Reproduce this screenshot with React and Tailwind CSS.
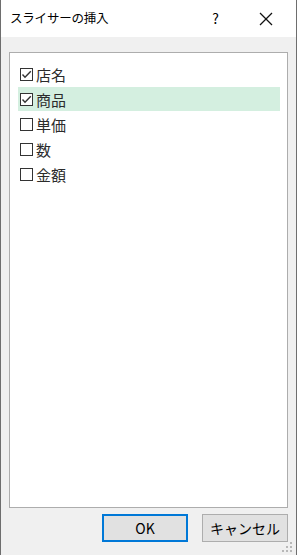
import React from 'react';

const FONT = { fontFamily: '"Yu Gothic UI", "Noto Sans CJK JP", "Noto Sans", sans-serif' };

const FIELDS = [
  { id: 'store', label: '店名', checked: true },
  { id: 'product', label: '商品', checked: true, selected: true },
  { id: 'price', label: '単価', checked: false },
  { id: 'qty', label: '数', checked: false },
  { id: 'amount', label: '金額', checked: false },
];

function CheckBox({ checked }) {
  return (
    <span className="w-[13px] h-[13px] border border-[#333333] bg-white flex items-center justify-center shrink-0">
      {checked && (
        <svg viewBox="0 0 11 11" width="11" height="11" fill="none" stroke="#333333" strokeWidth="1.4">
          <polyline points="1.5,5.5 4,8.2 9.8,2.2" />
        </svg>
      )}
    </span>
  );
}

function Row({ item }) {
  return (
    <div className={`h-6 flex items-center pl-[2px] ${item.selected ? 'bg-[#d4efe0]' : ''}`}>
      <CheckBox checked={item.checked} />
      <span className="ml-[3px] text-[15px] leading-none text-[#2b2b2b]">{item.label}</span>
    </div>
  );
}

function GripDots() {
  const dots = [
    [9, 1], [5, 5], [9, 5], [1, 9], [5, 9], [9, 9],
  ];
  return (
    <svg width="12" height="12" viewBox="0 0 12 12" className="absolute right-[3px] bottom-[2px]">
      {dots.map(([x, y]) => (
        <rect key={`${x}-${y}`} x={x} y={y} width="2" height="2" fill="#b8b8b8" />
      ))}
    </svg>
  );
}

export default function App() {
  return (
    <div className="w-[297px] h-[555px] flex flex-col bg-[#f0f0f0] border-l border-r border-[#6e6e6e] relative overflow-hidden" style={FONT}>
      {/* title bar */}
      <div className="h-[37px] bg-white flex items-center shrink-0">
        <span className="pl-[9px] text-[12.5px] text-black tracking-[-0.2px]">スライサーの挿入</span>
        <span className="ml-auto text-[14px] text-black mr-[40px]">?</span>
        <svg width="14" height="14" viewBox="0 0 14 14" className="mr-[23px]" stroke="#111" strokeWidth="1.2">
          <line x1="1" y1="1" x2="13" y2="13" />
          <line x1="13" y1="1" x2="1" y2="13" />
        </svg>
      </div>

      {/* body */}
      <div className="flex-1 flex flex-col pt-[15px] pl-[8px] pr-[8px]">
        <div className="h-[456px] border border-[#adadad] bg-white pt-[9px] pl-[8px] pr-[7px] flex flex-col gap-px">
          {FIELDS.map(f => <Row key={f.id} item={f} />)}
        </div>

        <div className="flex justify-end gap-[14px] mt-[6px]">
          <button className="w-[86px] h-[28px] bg-[#e1e1e1] border-2 border-[#0078d7] text-[14px] text-black">OK</button>
          <button className="w-[86px] h-[28px] bg-[#e1e1e1] border border-[#adadad] text-[14px] text-black">キャンセル</button>
        </div>
      </div>
      <GripDots />
    </div>
  );
}
